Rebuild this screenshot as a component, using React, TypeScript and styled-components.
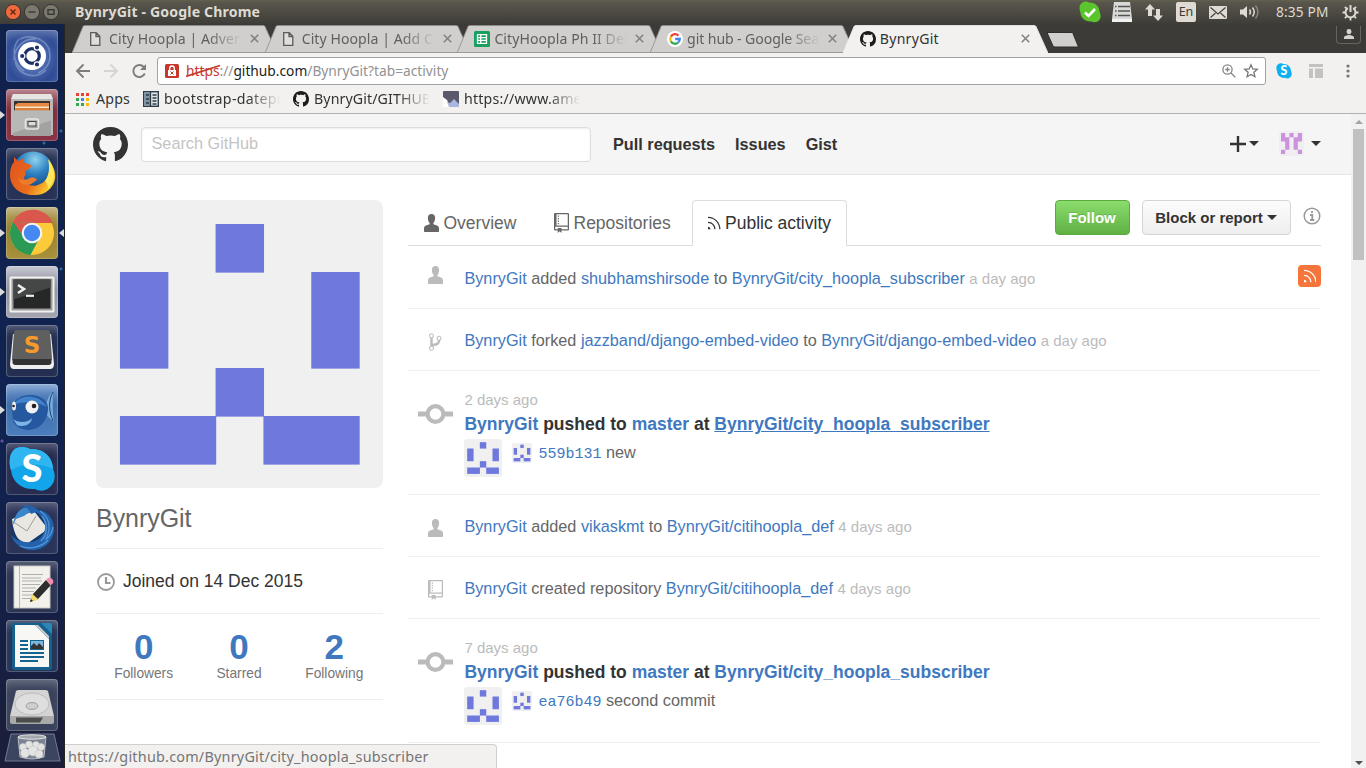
import React from "react";
import styled, { createGlobalStyle, css } from "styled-components";

const UI_FONT = `"Noto Sans", "Open Sans", sans-serif`;
const PAGE_FONT = `"Liberation Sans", Arial, sans-serif`;
const LINK = "#4078c0";

const GlobalStyle = createGlobalStyle`
  * { box-sizing: border-box; }
  html, body { margin: 0; padding: 0; overflow: hidden; }
  body { font-family: ${PAGE_FONT}; }
  svg { display: block; flex: none; }
`;

/* ---------- desktop shell ---------- */

const Desktop = styled.div`
  width: 1366px;
  height: 768px;
  display: flex;
  flex-direction: column;
  overflow: hidden;
  background: #fff;
`;

const Panel = styled.header`
  height: 24px;
  flex: none;
  display: flex;
  align-items: center;
  padding: 0 7px 0 5px;
  background: linear-gradient(#66614f 0, #59564c 2px, #3f3e39 23px, #3c3b37 24px);
  color: #dfdbd2;
  font-family: ${UI_FONT};
`;

const WindowButtons = styled.div`
  display: flex;
  gap: 3px;
  width: 70px;
`;

const WindowTitle = styled.div`
  flex: 1;
  font-size: 14.1px;
  font-weight: 700;
  letter-spacing: 0.15px;
  line-height: 24px;
`;

const Indicators = styled.div`
  display: flex;
  align-items: center;
`;

const Indicator = styled.div<{ $ml: number }>`
  margin-left: ${(p) => p.$ml}px;
  display: flex;
`;

const KeyboardBadge = styled.div`
  width: 20px;
  height: 20px;
  border-radius: 2px;
  background: #dfdbd2;
  color: #3c3b37;
  font-size: 12.5px;
  line-height: 20px;
  text-align: center;
`;

const Clock = styled.div`
  margin-left: 16px;
  width: 53px;
  font-size: 13.7px;
  letter-spacing: 0.15px;
  line-height: 22px;
  margin-top: -1px;
  white-space: nowrap;
`;

const Workspace = styled.div`
  flex: 1;
  display: flex;
  min-height: 0;
`;

const Launcher = styled.aside`
  width: 65px;
  flex: none;
  padding-top: 6px;
  display: flex;
  flex-direction: column;
  gap: 7px;
  border-right: 1px solid #25241f;
  background:
    radial-gradient(circle at 61px 107px, #2c6496 0 1px, transparent 2px),
    radial-gradient(circle at 44px 119px, #2c6496 0 1px, transparent 2px),
    radial-gradient(circle at 61px 245px, #2c6496 0 1px, transparent 2px),
    radial-gradient(circle at 2px 417px, #6a4fa0 0 1px, transparent 2px),
    linear-gradient(#10214a, #102350 35%, #11224f 60%, #171f42 85%, #1c1e38);
`;

const LauncherItem = styled.div<{ $bg: string }>`
  position: relative;
  width: 52px;
  height: 52px;
  margin-left: 6px;
  flex: none;
  border-radius: 4px;
  background: ${(p) => p.$bg};
  box-shadow: inset 0 0 0 1px rgba(255, 255, 255, 0.2), inset 0 8px 10px -4px rgba(255, 255, 255, 0.28);
`;

const Pip = styled.i<{ $side: "left" | "right" }>`
  position: absolute;
  top: 22px;
  border: 4px solid transparent;
  ${(p) =>
    p.$side === "left"
      ? css`
          left: -6px;
          border-left: 5px solid #dcdcdc;
        `
      : css`
          right: -6px;
          border-right: 5px solid #dcdcdc;
        `}
`;

const TrashSlot = styled.div`
  margin: -5px 0 0 4px;
`;

/* ---------- browser chrome ---------- */

const Browser = styled.div`
  flex: 1;
  min-width: 0;
  display: flex;
  flex-direction: column;
  position: relative;
`;

const TabStrip = styled.div`
  height: 29px;
  flex: none;
  display: flex;
  align-items: flex-end;
  padding-left: 7px;
  background: #3c3b37;
`;

const BrowserTab = styled.div<{ $active?: boolean }>`
  position: relative;
  z-index: ${(p) => (p.$active ? 2 : 1)};
  width: 205px;
  height: 28px;
  margin-right: -12.3px;
  padding: 0 18px 1px 17px;
  flex: none;
  display: flex;
  align-items: center;
  font-family: ${UI_FONT};
  font-size: 14.1px;
  color: ${(p) => (p.$active ? "#333" : "#5f5f5f")};
`;

const TabShape = styled.svg`
  position: absolute;
  left: 0;
  top: 0;
  z-index: -1;
`;

const TabTitle = styled.span<{ $ls?: number; $fade?: boolean }>`
  width: 137px;
  margin-left: 4px;
  margin-right: 4px;
  flex: none;
  white-space: nowrap;
  line-height: 22px;
  letter-spacing: ${(p) => p.$ls ?? 0}px;
  ${(p) =>
    p.$fade &&
    css`
      mask-image: linear-gradient(90deg, #000 100px, transparent 133px);
    `}
`;

const NewTabButton = styled.svg`
  margin: 0 0 5px 10px;
`;

const ProfileButton = styled.div`
  margin: 0 5px 9px auto;
  width: 25px;
  height: 18px;
  border: 1px solid #66645e;
  border-top: 0;
  border-radius: 0 0 4px 4px;
  display: flex;
  justify-content: center;
  padding-top: 3px;
`;

const Toolbar = styled.div`
  height: 36px;
  flex: none;
  display: flex;
  align-items: center;
  padding-left: 10px;
  background: #f2f1f0;
  color: #757575;
`;

const NavIcons = styled.div`
  display: flex;
  gap: 11px;
  width: 82px;
`;

const Omnibox = styled.div`
  width: 1109px;
  height: 28px;
  display: flex;
  align-items: center;
  padding: 0 6px 0 7px;
  background: #fff;
  border: 1px solid #a3a2a1;
  border-radius: 3px;
`;

const UrlText = styled.div`
  flex: 1;
  margin-left: 7px;
  font-family: ${UI_FONT};
  font-size: 13.75px;
  line-height: 24px;
  color: #929292;
  white-space: nowrap;
`;

const UrlScheme = styled.span`
  position: relative;
  color: #c6382c;
`;

const SchemeStrike = styled.svg`
  position: absolute;
  left: 0;
  top: 3px;
`;

const UrlHost = styled.span`
  color: #1c1c1c;
`;

const BookmarkBar = styled.div`
  height: 25px;
  flex: none;
  display: flex;
  align-items: center;
  padding: 0 0 4px 11px;
  background: #f2f1f0;
  border-bottom: 1px solid #b3b1ae;
`;

const Bookmark = styled.div<{ $w: number }>`
  width: ${(p) => p.$w}px;
  display: flex;
  align-items: center;
  gap: 5px;
`;

const BookmarkText = styled.span<{ $fade?: boolean; $ls?: number }>`
  width: ${(p) => (p.$fade ? "124px" : "auto")};
  white-space: nowrap;
  font-family: ${UI_FONT};
  font-size: 14.2px;
  line-height: 20px;
  color: #333;
  letter-spacing: ${(p) => p.$ls ?? 0}px;
  ${(p) =>
    p.$fade &&
    css`
      mask-image: linear-gradient(90deg, #000 84px, transparent 116px);
    `}
`;

const StatusBubble = styled.div`
  position: absolute;
  left: 0;
  bottom: 0;
  width: 432px;
  height: 24px;
  padding-left: 3px;
  background: #f2f1f0;
  border: 1px solid #d0cfce;
  border-left: 0;
  border-bottom: 0;
  border-top-right-radius: 4px;
  font-family: ${UI_FONT};
  font-size: 14.4px;
  line-height: 24px;
  color: #757575;
  white-space: nowrap;
  letter-spacing: 0.22px;
`;

const Viewport = styled.div`
  flex: 1;
  min-height: 0;
  display: flex;
`;

const Scrollbar = styled.div`
  width: 15px;
  flex: none;
  display: flex;
  flex-direction: column;
  align-items: center;
  background: #f1f1f1;
`;

const ScrollArrow = styled.i<{ $down?: boolean }>`
  margin: 6px 0 5px;
  border: 4px solid transparent;
  ${(p) =>
    p.$down
      ? css`
          margin: auto 0 3px;
          border-top-color: #505050;
          border-bottom: 0;
        `
      : css`
          border-bottom-color: #a3a3a3;
          border-top: 0;
        `}
`;

const ScrollThumb = styled.div`
  width: 11px;
  height: 131px;
  background: #c1c1c1;
`;

/* ---------- GitHub page ---------- */

const Page = styled.div`
  flex: 1;
  min-width: 0;
  overflow: hidden;
  background: #fff;
`;

const SiteHeader = styled.header`
  height: 61px;
  display: flex;
  align-items: center;
  padding: 0 30px 0 28px;
  background: #f5f5f5;
  border-bottom: 1px solid #e5e5e5;
`;

const SearchBox = styled.div`
  width: 450px;
  height: 35px;
  margin: 0 22px 0 13px;
  padding-left: 9.5px;
  border: 1px solid #ddd;
  border-radius: 4px;
  background: #fff;
  box-shadow: inset 0 1px 2px rgba(0, 0, 0, 0.075);
  font-size: 16.25px;
  line-height: 30px;
  color: #c4c4c4;
`;

const SiteNav = styled.nav`
  flex: 1;
  display: flex;
  gap: 20px;
  font-size: 16.25px;
  font-weight: 700;
  color: #333;
`;

const UserNav = styled.div`
  display: flex;
  align-items: center;
  margin-top: -1px;
`;

const Caret = styled.i<{ $ml: number }>`
  display: inline-block;
  margin-left: ${(p) => p.$ml}px;
  border: 5px solid transparent;
  border-top-color: #333;
  border-bottom: 0;
`;

const Main = styled.main`
  display: flex;
  gap: 25px;
  padding: 25px 30px 0 31px;
`;

const Sidebar = styled.aside`
  width: 287px;
  flex: none;
`;

const UserName = styled.h1`
  margin: 0;
  height: 61px;
  padding-top: 16px;
  border-bottom: 1px solid #eee;
  font-size: 25px;
  font-weight: 400;
  line-height: 29px;
  letter-spacing: -0.04px;
  color: #666;
`;

const Joined = styled.div`
  height: 65px;
  display: flex;
  align-items: center;
  gap: 8px;
  padding-left: 1px;
  border-bottom: 1px solid #eee;
  font-size: 17.5px;
  color: #333;
`;

const JoinedIcon = styled.svg`
  margin-top: 2px;
`;

const Stats = styled.div`
  height: 86px;
  display: flex;
  padding: 13px 1px 0 0;
  border-bottom: 1px solid #eee;
`;

const Stat = styled.div`
  flex: 1;
  text-align: center;
`;

const StatValue = styled.strong`
  display: block;
  font-size: 35px;
  line-height: 39px;
  color: ${LINK};
`;

const StatLabel = styled.span`
  display: block;
  font-size: 13.75px;
  line-height: 15px;
  color: #767676;
`;

const Activity = styled.section`
  flex: 1;
  min-width: 0;
`;

const TabNav = styled.div`
  height: 46px;
  display: flex;
  align-items: flex-start;
  border-bottom: 1px solid #ddd;
`;

const NavTab = styled.div<{ $active?: boolean; $w: number }>`
  width: ${(p) => p.$w}px;
  height: 46px;
  margin-right: 5px;
  padding: 0 0 1px 15px;
  display: flex;
  align-items: center;
  gap: 4.5px;
  border: 1px solid transparent;
  border-bottom: 0;
  border-radius: 4px 4px 0 0;
  font-size: 17.5px;
  color: #666;
  white-space: nowrap;
  ${(p) =>
    p.$active &&
    css`
      background: #fff;
      border-color: #ddd;
      color: #333;
    `}
`;

const ActionBar = styled.div`
  margin-left: auto;
  display: flex;
`;

const Button = styled.button<{ $primary?: boolean; $w: number }>`
  width: ${(p) => p.$w}px;
  height: 35px;
  margin: 0 12px 0 0;
  padding: 0 1px 0 0;
  border: 1px solid #d5d5d5;
  border-radius: 4px;
  background: linear-gradient(#fcfcfc, #eee);
  font-family: ${PAGE_FONT};
  font-size: 15px;
  font-weight: 700;
  color: #333;
  display: flex;
  align-items: center;
  justify-content: center;
  white-space: nowrap;
  ${(p) =>
    p.$primary &&
    css`
      border-color: #5ca941;
      background: linear-gradient(#8add6d, #60b044);
      color: #fff;
      text-shadow: 0 -1px 0 rgba(0, 0, 0, 0.15);
    `}
`;

const InfoIcon = styled.svg`
  margin: 7px 0.5px 0 -0.5px;
`;

const EventRow = styled.div<{ $tall?: boolean; $first?: boolean }>`
  height: ${(p) => (p.$tall ? 124 : p.$first ? 63 : 62)}px;
  width: 912px;
  display: flex;
  align-items: ${(p) => (p.$tall ? "flex-start" : "center")};
  padding-top: ${(p) => (p.$tall ? 20 : p.$first ? 2 : 1)}px;
  border-bottom: 1px solid #f1f1f1;
  font-size: 16.25px;
  line-height: 20px;
  color: #666;
  white-space: nowrap;
`;

const EventIcon = styled.div<{ $shift: number }>`
  width: 56.4px;
  padding-right: 1px;
  flex: none;
  display: flex;
  justify-content: center;
  margin-top: ${(p) => p.$shift}px;
  color: #bbb;
`;

const Link = styled.a<{ $underline?: boolean }>`
  color: ${LINK};
  text-decoration: ${(p) => (p.$underline ? "underline" : "none")};
`;

const Time = styled.time`
  font-size: 15px;
  color: #bbb;
`;

const RssButton = styled.div`
  width: 23px;
  height: 22px;
  margin: -4px -1px 0 auto;
  display: flex;
  justify-content: center;
  padding: 1px 0 0 1px;
  border-radius: 4px;
  background: #f6753b;
  color: #fff;
`;

const PushTitle = styled.div`
  font-size: 17.5px;
  font-weight: 700;
  line-height: 24px;
  margin-top: 2px;
  color: #333;
`;

const PushBody = styled.div`
  padding-top: 7px;
`;

const PushTime = styled(Time)`
  display: block;
  line-height: 20px;
  margin-top: -10px;
  padding-top: 2px;
`;

const Commit = styled.div`
  display: flex;
  align-items: flex-start;
  margin: 3px 0 0 -0.4px;
`;

const CommitText = styled.span`
  margin: 3px 0 0 6.4px;
`;

const Hash = styled.code`
  font-family: "Liberation Mono", monospace;
  font-size: 15px;
  color: ${LINK};
`;

const SmallAvatar = styled.div`
  margin: 4px 0 0 10px;
`;

/* ---------- icons ---------- */

const OctocatIcon = ({ size, color = "#333" }: { size: number; color?: string }) => (
  <svg width={size} height={size} viewBox="0 0 16 16" fill={color}>
    <path d="M8 0C3.58 0 0 3.58 0 8c0 3.54 2.29 6.53 5.47 7.59.4.07.55-.17.55-.38 0-.19-.01-.82-.01-1.49-2.01.37-2.53-.49-2.69-.94-.09-.23-.48-.94-.82-1.13-.28-.15-.68-.52-.01-.53.63-.01 1.08.58 1.23.82.72 1.21 1.87.87 2.33.66.07-.52.28-.87.51-1.07-1.78-.2-3.64-.89-3.64-3.95 0-.87.31-1.59.82-2.15-.08-.2-.36-1.02.08-2.12 0 0 .67-.21 2.2.82.64-.18 1.32-.27 2-.27.68 0 1.36.09 2 .27 1.53-1.04 2.2-.82 2.2-.82.44 1.1.16 1.92.08 2.12.51.56.82 1.27.82 2.15 0 3.07-1.87 3.75-3.65 3.95.29.25.54.73.54 1.48 0 1.07-.01 1.93-.01 2.2 0 .21.15.46.55.38A8.013 8.013 0 0016 8c0-4.42-3.58-8-8-8z" />
  </svg>
);

const PersonIcon = () => (
  <svg width="15" height="18" viewBox="0 0 15 18" fill="currentColor">
    <path d="M7.500 0C5.200 0 3.900 1.500 3.900 3.800c0 2.300.5 4.200 1.700 5.200v1.200L2 11.500C.8 12 0 13 0 14.300V17c0 .6.4 1 1 1h13c.6 0 1-.4 1-1v-2.700c0-1.300-.8-2.300-2-2.800l-3.600-1.300V9c1.200-1 1.700-2.900 1.700-5.200C11.100 1.500 9.800 0 7.500 0z" />
  </svg>
);

const RepoIcon = () => (
  <svg width="15" height="20" viewBox="0 0 12 16" fill="currentColor">
    <path d="M4 9H3V8h1v1zm0-3H3v1h1V6zm0-2H3v1h1V4zm0-2H3v1h1V2zm8-1v12c0 .55-.45 1-1 1H6v2l-1.500-1.500L3 16v-2H1c-.55 0-1-.45-1-1V1c0-.55.45-1 1-1h10c.55 0 1 .45 1 1zm-1 10H1v2h2v-1h3v1h5v-2zm0-10H2v9h9V1z" />
  </svg>
);

const BranchIcon = () => (
  <svg width="12.500" height="20" viewBox="0 0 10 16" fill="currentColor">
    <path d="M10 5c0-1.110-.89-2-2-2a1.993 1.993 0 0 0-1 3.720v.3c-.02.52-.23.98-.63 1.380-.4.4-.86.61-1.380.63-.83.02-1.480.16-2 .45V4.720a1.993 1.993 0 0 0-1-3.720C.88 1 0 1.890 0 3a2 2 0 0 0 1 1.720v6.560c-.59.35-1 .99-1 1.720 0 1.110.89 2 2 2 1.110 0 2-.89 2-2 0-.53-.2-1-.53-1.360.09-.06.48-.41.59-.47.25-.11.56-.17.94-.17 1.050-.05 1.950-.45 2.750-1.250S8.950 7.770 9 6.730h-.02C9.590 6.370 10 5.730 10 5zM2 1.800c.66 0 1.200.55 1.200 1.200 0 .65-.55 1.200-1.200 1.200C1.350 4.200.8 3.650.8 3c0-.65.55-1.200 1.200-1.200zm0 12.410c-.66 0-1.200-.55-1.200-1.200 0-.65.55-1.200 1.200-1.200.65 0 1.200.55 1.200 1.200 0 .65-.55 1.200-1.200 1.200zm6-8c-.66 0-1.200-.55-1.200-1.200 0-.65.55-1.200 1.200-1.200.65 0 1.200.55 1.200 1.200 0 .65-.55 1.200-1.200 1.200z" />
  </svg>
);

const RssIcon = () => (
  <svg width="12.500" height="20" viewBox="0 0 10 16" fill="currentColor">
    <path d="M2 13H0v-2c1.110 0 2 .89 2 2zM0 3v1a9 9 0 0 1 9 9h1C10 7.480 5.520 3 0 3zm0 4v1c2.750 0 5 2.250 5 5h1c0-3.310-2.690-6-6-6z" />
  </svg>
);

const CommitIcon = () => (
  <svg width="35" height="20" viewBox="0 0 35 20" fill="none" stroke="currentColor">
    <path d="M0 10h9M26 10h9" strokeWidth="5" />
    <circle cx="17.500" cy="10" r="7.900" strokeWidth="4.200" />
  </svg>
);

const identiconCells = [
  [2, 0, 1, 1],
  [0, 1, 1, 2],
  [4, 1, 1, 2],
  [2, 3, 1, 1],
  [0, 4, 2, 1],
  [3, 4, 2, 1],
];

const Identicon = ({ size, height = size, radius }: { size: number; height?: number; radius: number }) => (
  <svg width={size} height={height} viewBox="0 0 420 420" preserveAspectRatio="none">
    <rect width="420" height="420" rx={(radius * 420) / size} fill="#f0f0f0" />
    {identiconCells.map(([x, y, w, h], i) => (
      <rect key={i} x={35 + x * 70} y={35 + y * 70} width={w * 70 + 0.9} height={h * 70 + 0.9} fill="#6f79dd" />
    ))}
  </svg>
);

const ViewerAvatar = () => (
  <svg width="25" height="25" viewBox="0 0 25 25">
    <rect width="25" height="25" rx="3" fill="#f0eef1" />
    <path
      d="M2 2h4.200v4.300h4.200v12.500H6.200v-8.400H2zM10.400 2h4.200v4.300h-4.200zM18.800 2H23v8.400h-4.200v8.400h-4.200V6.300h4.200zM2 18.800h4.200V23H2zM18.800 18.800H23V23h-4.200z"
      fill="#cb93dd"
    />
  </svg>
);

const CloseX = () => (
  <svg width="9" height="9" viewBox="0 0 9 9" stroke="#858381" strokeWidth="1.600">
    <path d="M.8.8l7.400 7.400M8.200.8L.8 8.200" />
  </svg>
);

const FileIcon = () => (
  <svg width="16" height="16" viewBox="0 0 16 16" fill="#dededc" stroke="#5c5b59" strokeWidth="1.300">
    <path d="M1.700 1.700h5.500l3.600 3.600v9H1.700zM7 1.700v3.800h3.800" />
  </svg>
);

const SheetsIcon = () => (
  <svg width="16" height="16" viewBox="0 0 16 16">
    <rect width="16" height="16" rx="1.500" fill="#17a05e" />
    <path d="M3.500 3.700h9v8.600h-9zM3.500 6.600h9M3.500 9.400h9M6.700 3.700v8.600" fill="none" stroke="#fff" strokeWidth="1.300" />
  </svg>
);

const GoogleIcon = () => (
  <svg width="16" height="16" viewBox="0 0 16 16" fill="none" strokeWidth="2.300">
    <circle cx="8" cy="8" r="8" fill="#fff" />
    <path d="M11.500 4.600A4.800 4.800 0 0 0 3.900 5.600" stroke="#ea4335" />
    <path d="M3.900 5.600a4.800 4.800 0 0 0 0 4.800" stroke="#fbbc05" />
    <path d="M3.900 10.400a4.800 4.800 0 0 0 7.300 1.100" stroke="#34a853" />
    <path d="M11.200 11.500A4.800 4.800 0 0 0 12.800 8H8.200" stroke="#4285f4" />
  </svg>
);

const WindowButton = ({ kind }: { kind: "close" | "min" | "max" }) => (
  <svg width="16" height="18" viewBox="0 0 16 18">
    <circle cx="8" cy="9" r="7.600" fill={kind === "close" ? "#ee6a3c" : "#7b786e"} stroke="#33322e" strokeWidth=".9" />
    <g fill="none" stroke={kind === "close" ? "#5e2210" : "#34332f"} strokeWidth="1.300">
      {kind === "close" && <path d="M5.500 6.500l5 5M10.500 6.500l-5 5" />}
      {kind === "min" && <path d="M4.500 9h7" />}
      {kind === "max" && <rect x="5" y="6.700" width="6" height="4.600" />}
    </g>
  </svg>
);

const SkypeCloud = ({ size, color, children }: { size: number; color: string; children?: React.ReactNode }) => (
  <svg width={size} height={size} viewBox="0 0 22 22">
    <path
      d="M6.500.5c1.600 0 2.600.5 3.400 1C15.500 1 20.500 5 20.600 11c1.900 3.200 1.200 7.500-1.700 9.200-2.200 1.500-4.700 1.200-6.300.2C6.500 21 1.500 17 1.400 11 .3 9 0 5.500 1.500 3.200A6 6 0 0 1 6.500.5z"
      fill={color}
    />
    {children}
  </svg>
);

const tiles: { bg: string; left?: boolean; right?: boolean; art: React.ReactNode }[] = [
  {
    bg: "radial-gradient(circle at 50% 55%, #6f8cc8, #2f4c96 65%, #38559c)",
    art: (
      <>
        <g fill="none" stroke="#a9bce4" strokeOpacity=".45" strokeWidth="1.600">
          <path d="M14 9C26 3 44 10 44 26c0 9-6 15-12 17M8 30C8 14 22 8 30 9M40 40C30 50 12 46 9 31M13 9C5 18 7 34 18 41" />
        </g>
        <circle cx="26" cy="26" r="14" fill="#fff" />
        <circle cx="26" cy="26" r="7.300" fill="none" stroke="#1c2f66" strokeWidth="3.200" />
        <g fill="#1c2f66" stroke="#fff" strokeWidth="1.200">
          <circle cx="16.200" cy="26" r="2.700" />
          <circle cx="31" cy="17.500" r="2.700" />
          <circle cx="31" cy="34.500" r="2.700" />
        </g>
      </>
    ),
  },
  {
    bg: "linear-gradient(#a86673, #7c2d3c 40%, #8a3345)",
    left: true,
    art: (
      <>
        <path d="M7 5h38l2 6v35H5V11z" fill="#b9b9b7" />
        <path d="M7 5h38l2 5H5z" fill="#e4e4e2" />
        <rect x="8" y="12" width="36" height="12" fill="#3a3331" />
        <path d="M9 16l3-2h31v8H9z" fill="#e58943" />
        <path d="M9 17.500h34v1.500H9z" fill="#f7e3c8" />
        <path d="M10 19h32v4H10z" fill="#df7f37" />
        <rect x="7" y="21.500" width="38" height="25.500" rx="1" fill="#a2a2a0" />
        <path d="M7 21.500h38v10L7 44z" fill="#b8b8b6" />
        <rect x="19.500" y="30" width="13" height="10" rx="2" fill="none" stroke="#e6e6e4" strokeWidth="1.600" />
        <rect x="22" y="32.500" width="8" height="4.500" fill="#ddd" stroke="#444" />
      </>
    ),
  },
  {
    bg: "#273356",
    art: (
      <>
        <defs>
          <radialGradient id="globe" cx=".55" cy=".2" r=".8">
            <stop offset="0" stopColor="#8fd3ee" />
            <stop offset=".45" stopColor="#2b7fc0" />
            <stop offset="1" stopColor="#14346c" />
          </radialGradient>
          <linearGradient id="fox" x1="0" y1="0" x2="1" y2=".5">
            <stop offset="0" stopColor="#e0521f" />
            <stop offset=".65" stopColor="#ea6d1c" />
            <stop offset="1" stopColor="#fbc82f" />
          </linearGradient>
        </defs>
        <circle cx="27" cy="24" r="20.500" fill="url(#globe)" />
        <path d="M44 14c4 5 6 11 5 17-2 10-11 17-22 16C13 47 4 38 4 27c0-5 1-10 4-13l0-5 4 4 6-3-1 4c3 1 5 2 8 3 1 3-3 4-6 6 1 2 1 4-1 6 1 8 9 11 16 7 8-3 10-11 10-22z" fill="url(#fox)" />
        <path d="M42 11c7 8 9 21 0 30 0-4-1-6-3-8 4-6 5-13 3-22z" fill="#fde75a" />
        <path d="M12 30c3 3 7 2 10 1 4-2 7-2 9 1-4 2-5 5-10 5s-8-3-9-7z" fill="#ee7a2b" />
      </>
    ),
  },
  {
    bg: "linear-gradient(#b6a567, #98822f 40%, #a8903c)",
    left: true,
    right: true,
    art: (
      <>
        <circle cx="26" cy="26" r="22" fill="#fccb3c" />
        <path d="M7 15a22 22 0 0 1 40 1H26z" fill="#d9574c" />
        <path d="M7 15A22 22 0 0 0 24.500 48L34 30 26 16z" fill="#2a9a55" />
        <path d="M7 15l10 14 9-13z" fill="#d9574c" />
        <path d="M7 15l10 15-1 8A22 22 0 0 1 7 15z" fill="#2a9a55" />
        <circle cx="26" cy="26" r="10.300" fill="#f5f5f5" />
        <circle cx="26" cy="26" r="8.200" fill="#4688f1" />
      </>
    ),
  },
  {
    bg: "linear-gradient(#b9bac6, #92939f 45%, #a5a5b0)",
    left: true,
    art: (
      <>
        <rect x="3.500" y="10.500" width="45" height="36" rx="1.500" fill="#f0f0ee" />
        <rect x="5.500" y="12.500" width="41" height="32" fill="#9b9b99" />
        <rect x="7.500" y="13.500" width="37" height="29" fill="#262827" />
        <path d="M7.500 13.500h37v8l-37 12z" fill="#444745" />
        <path d="M12 19l6 4-6 4" fill="none" stroke="#eee" strokeWidth="2.600" />
        <path d="M20 29.800h8" stroke="#eee" strokeWidth="2.200" />
      </>
    ),
  },
  {
    bg: "#232e50",
    art: (
      <>
        <path d="M7 9L4 39q0 5 4 5h36q4 0 4-5L45 9z" fill="#efefef" />
        <path d="M8 7q0-2 3-2h30q3 0 3 2l2 26q0 3-3 3H9q-3 0-3-3z" fill="#5f5f5f" />
        <path d="M6.500 34h39v3q0 3-3 3h-33q-3 0-3-3z" fill="#333" />
        <text x="26" y="28" textAnchor="middle" fontFamily="DejaVu Sans" fontWeight="700" fontSize="23" fill="#f8992b">S</text>
      </>
    ),
  },
  {
    bg: "linear-gradient(#6f97cc, #3d6dac 40%, #4c7ebd)",
    left: true,
    art: (
      <>
        <path d="M38 25c3-7 4-13 9-18 0 9-1 19 1 31-5-3-6-7-10-9z" fill="#79aede" />
        <path d="M47 8c-5 9-4 20 0 29" fill="none" stroke="#1d3a68" />
        <path d="M6 24C7 15 16 11 24 11c12 0 19 7 18 15-1 12-9 19-19 20-8 0-14-4-16-9z" fill="#2459a0" />
        <path d="M7 21C15 9 33 10 41 23c-10-6-25-6-34-2z" fill="#4182c8" />
        <path d="M7 35c5 4 15 4 19-1-1 8-10 9-15 7z" fill="#7fb4e6" />
        <circle cx="26" cy="23" r="6.500" fill="#f2f2f2" />
        <circle cx="28" cy="22" r="2.300" fill="#222" />
        <ellipse cx="8" cy="22" rx="2" ry="4.500" fill="#eee" />
        <circle cx="7.500" cy="22" r="1.300" fill="#222" />
      </>
    ),
  },
  {
    bg: "#262d50",
    art: (
      <>
        <path d="M16 4c4 0 6 1 8 2 13-1 23 8 23 20 3 6 2 14-3 18-5 5-11 4-15 2C16 47 6 39 5 27 3 21 3 12 7 8c2-3 5-4 9-4z" fill="#12a5ea" />
        <path d="M16 4c4 0 6 1 8 2 13-1 23 8 23 20-12-6-30-6-42 1C3 21 3 12 7 8c2-3 5-4 9-4z" fill="#2fb5ef" />
        <text x="26" y="39" textAnchor="middle" fontFamily="Lato" fontWeight="900" fontSize="38" fill="#fff">S</text>
      </>
    ),
  },
  {
    bg: "#2a3358",
    art: (
      <>
        <circle cx="27" cy="27" r="21" fill="#14386c" />
        <path d="M6 17l22-8 14 18-20 14C13 40 8 35 6 17z" fill="#e9e7e2" />
        <path d="M6 19l15 10 9-15" fill="none" stroke="#a09c95" />
        <path d="M27 8c12-2 21 7 21 19S38 48 27 48c-11 0-19-6-22-15 8 9 23 9 29 3 9-8 6-21-7-28z" fill="#2463ab" />
        <path d="M8 18C12 6 20 2 31 8c-6 0-9 3-13 6l-8 3-4 8z" fill="#3a86cc" />
        <path d="M15 4c8-2 14 0 18 5l-8 3c-2-5-5-7-10-8z" fill="#2463ab" />
        <path d="M34 9c9 6 12 16 6 28 4-2 6-7 7-12M14 44c10 4 22 1 28-6M36 14c6 8 6 18-1 25" fill="none" stroke="#4f97da" strokeWidth="1.300" />
      </>
    ),
  },
  {
    bg: "#2c3554",
    art: (
      <>
        <rect x="8" y="5" width="36" height="42" fill="#f2f1ec" stroke="#c9c8c4" />
        <path d="M13.500 5v42" stroke="#e9a3a3" />
        <path d="M16 13.500h21M16 17h19M16 20h20M16 23.500h18M16 27h14M16 30.500h12M16 34h10M16 37.500h9" stroke="#b0b0ae" strokeWidth="1.200" />
        <path d="M24 41l3-8L40 19l5 5-13 14z" fill="#2d2d2d" />
        <path d="M24 41l2.500-8 6 5.500z" fill="#f0dc6a" />
        <path d="M24 41l1-3 2 2z" fill="#222" />
        <path d="M40 19l2-2q3-1 5 2 1 3-1 4l-1.500 1.500z" fill="#ee8fae" />
      </>
    ),
  },
  {
    bg: "#253557",
    art: (
      <>
        <path d="M8 3h28l10 10v34q0 3-3 3H9q-3 0-3-3V5q0-2 2-2z" fill="#155f8c" />
        <path d="M9 5h20l14 14v28H9z" fill="#f7f7f5" />
        <path d="M29 5h3l11 11v3z" fill="#c9c9c9" />
        <path d="M35 3h9q2 0 2 2v9z" fill="#2b85b7" />
        <path d="M14 21h8M14 25h8M14 29h8M14 33h24M14 37h24M14 41h18" stroke="#14648f" strokeWidth="1.900" />
        <rect x="24.500" y="20.500" width="13" height="9" fill="#7fb6dd" stroke="#14648f" />
        <path d="M25 29v-3l3-3 3 3 2-3 4 4v2z" fill="#333" />
      </>
    ),
  },
  {
    bg: "#3a425b",
    art: (
      <>
        <path d="M10 12q1-1 3-1h26q2 0 3 1l6 25H4z" fill="#d3d3d3" />
        <path d="M4 37h44v6q0 2-2 2H6q-2 0-2-2z" fill="#a9a9a9" />
        <path d="M10 38.500h27l-3 5H10z" fill="#4c4c4c" />
        <ellipse cx="26" cy="25" rx="17" ry="11" fill="#dedede" stroke="#bcbcbc" />
        <ellipse cx="26" cy="27" rx="6" ry="3.500" fill="#cdcdcd" stroke="#a0a0a0" />
      </>
    ),
  },
];

const TrashIcon = () => (
  <svg width="57" height="30" viewBox="0 0 57 30">
    <path d="M7 1h43l6 27H1z" fill="#3b4560" stroke="#737b90" />
    <path d="M14 4h28l-2 20q-12 4-24 0z" fill="#c9ccd0" fillOpacity=".45" stroke="#dfe1e4" strokeOpacity=".7" />
    <ellipse cx="28" cy="4" rx="14" ry="2.200" fill="#a4a8ad" stroke="#e2e3e5" />
    <g fill="#e4e4e3" stroke="#c3c5c7" strokeWidth=".6">
      <circle cx="19" cy="14" r="3.500" />
      <circle cx="25" cy="11.500" r="3.500" />
      <circle cx="32" cy="12" r="3.500" />
      <circle cx="37" cy="14" r="3.500" />
      <circle cx="21" cy="20" r="4.500" />
      <circle cx="29" cy="18" r="5" />
      <circle cx="35" cy="21" r="4" />
    </g>
  </svg>
);

const appColors = ["#ea4335", "#ea4335", "#ea4335", "#34a853", "#4285f4", "#fbbc05", "#34a853", "#34a853", "#fbbc05"];

const browserTabs: { title: string; icon: React.ReactNode; ls?: number; active?: boolean }[] = [
  { title: "City Hoopla | Adver", icon: <FileIcon />, ls: 0.05 },
  { title: "City Hoopla | Add Ca", icon: <FileIcon />, ls: 0.05 },
  { title: "CityHoopla Ph II Del", icon: <SheetsIcon />, ls: 0.05 },
  { title: "git hub - Google Sea", icon: <GoogleIcon />, ls: -0.1 },
  { title: "BynryGit", icon: <OctocatIcon size={16} color="#1b1b1b" />, ls: 0.25, active: true },
];

const Push = ({ when, hash, message, hovered }: { when: string; hash: string; message: string; hovered?: boolean }) => (
  <EventRow $tall>
    <EventIcon $shift={13}>
      <CommitIcon />
    </EventIcon>
    <PushBody>
      <PushTime>{when}</PushTime>
      <PushTitle>
        <Link>BynryGit</Link> pushed to <Link>master</Link> at{" "}
        <Link $underline={hovered}>BynryGit/city_hoopla_subscriber</Link>
      </PushTitle>
      <Commit>
        <Identicon size={38} radius={3} />
        <SmallAvatar>
          <Identicon size={20} radius={2} />
        </SmallAvatar>
        <CommitText>
          <Hash>{hash}</Hash> {message}
        </CommitText>
      </Commit>
    </PushBody>
  </EventRow>
);

export default function App() {
  return (
    <Desktop>
      <GlobalStyle />
      <Panel>
        <WindowButtons>
          <WindowButton kind="close" />
          <WindowButton kind="min" />
          <WindowButton kind="max" />
        </WindowButtons>
        <WindowTitle>BynryGit - Google Chrome</WindowTitle>
        <Indicators>
          <SkypeCloud size={22} color="#5cc42c">
            <path d="M6 11.500l3.500 3.500 6.500-7" fill="none" stroke="#fff" strokeWidth="2.600" />
          </SkypeCloud>
          <Indicator $ml={11}>
            <svg width="20" height="20" viewBox="0 0 20 20">
              <path d="M2 0h16l2 17v3H0v-3z" fill="#d8d9d9" />
              <path d="M0 17h20v3H0z" fill="#f2f2f2" />
              <path d="M6 4.500h12M6 9h12M6 13.500h12M3 4.500h1.500M3 9h1.500M3 13.500h1.500" stroke="#55544f" strokeWidth="1.300" />
            </svg>
          </Indicator>
          <Indicator $ml={13}>
            <svg width="18" height="17" viewBox="0 0 18 17" fill="#dfdbd2">
              <path d="M5 0l5 5.500H7V12H3V5.500H0zM13 17l-5-5.500h3V5h4v6.500h3z" />
            </svg>
          </Indicator>
          <Indicator $ml={13}>
            <KeyboardBadge>En</KeyboardBadge>
          </Indicator>
          <Indicator $ml={13}>
            <svg width="18" height="13" viewBox="0 0 18 13">
              <rect width="18" height="13" rx="1" fill="#dfdbd2" />
              <path d="M1.500 1.500L9 8l7.500-6.500M1.500 11.500L6.500 7M16.500 11.500L11.500 7" fill="none" stroke="#45443f" strokeWidth="1.200" />
            </svg>
          </Indicator>
          <Indicator $ml={13}>
            <svg width="20" height="16" viewBox="0 0 20 16" fill="none" stroke="#dfdbd2" strokeWidth="1.500">
              <path d="M0 5.500h3l4-3.500v12l-4-3.500H0z" fill="#dfdbd2" stroke="none" />
              <path d="M9.500 5.500q2 2.500 0 5M12.500 3.500q3.500 4.500 0 9" />
              <path d="M15.500 1.500q5 6.500 0 13" stroke="#8b887f" />
            </svg>
          </Indicator>
          <Clock>8:35 PM</Clock>
          <Indicator $ml={13}>
            <svg width="17" height="17" viewBox="0 0 17 17" fill="none" stroke="#dfdbd2">
              <path d="M5.800 4.200a5 5 0 1 0 5.400 0" strokeWidth="2" />
              <path d="M8.500 1v7" strokeWidth="2" />
              <path d="M2.900 2.900l2 2M14.100 2.900l-2 2M.5 8.500h2.500M14 8.500h2.500M2.900 14.100l1.800-1.800M14.100 14.100l-1.800-1.800M8.500 14v2.500" strokeWidth="1.800" />
            </svg>
          </Indicator>
        </Indicators>
      </Panel>

      <Workspace>
        <Launcher>
          {tiles.map((t, i) => (
            <LauncherItem key={i} $bg={t.bg}>
              <svg width="52" height="52" viewBox="0 0 52 52">
                {t.art}
              </svg>
              {t.left && <Pip $side="left" />}
              {t.right && <Pip $side="right" />}
            </LauncherItem>
          ))}
          <TrashSlot>
            <TrashIcon />
          </TrashSlot>
        </Launcher>

        <Browser>
          <TabStrip>
            {browserTabs.map((t, i) => (
              <BrowserTab key={i} $active={t.active}>
                <TabShape width="205" height="28" viewBox="0 0 205 28">
                  <path
                    d="M0 28L11 1.500Q11.500.5 13 .5h178q1.500 0 2 1L205 28z"
                    fill={t.active ? "#f2f1f0" : "#d1cfcd"}
                    stroke={t.active ? "#f2f1f0" : "#8f8d8a"}
                    strokeWidth=".8"
                  />
                  {!t.active && <path d="M0 27.500h205" stroke="#9b9996" />}
                </TabShape>
                {t.icon}
                <TabTitle $fade={!t.active} $ls={t.ls}>
                  {t.title}
                </TabTitle>
                <CloseX />
              </BrowserTab>
            ))}
            <NewTabButton width="33" height="16" viewBox="0 0 33 16">
              <path d="M1 .5h24q1.500 0 2 1L32.500 15H9q-1.500 0-2-1z" fill="#d1cfcd" stroke="#2e2d2a" />
            </NewTabButton>
            <ProfileButton>
              <svg width="10" height="10" viewBox="0 0 10 10" fill="#d5d3cf">
                <path d="M5 0a2.500 2.500 0 0 1 2.500 2.600C7.500 4.200 6.500 5.300 5 5.300S2.500 4.200 2.500 2.600A2.500 2.500 0 0 1 5 0zM0 10V8.500C0 7 3 6 5 6s5 1 5 2.500V10z" />
              </svg>
            </ProfileButton>
          </TabStrip>

          <Toolbar>
            <NavIcons>
              <svg width="17" height="16" viewBox="0 0 17 16" fill="none" stroke="#7d7d7d" strokeWidth="1.900">
                <path d="M15 8H3M8.500 1.500L2 8l6.500 6.500" />
              </svg>
              <svg width="17" height="16" viewBox="0 0 17 16" fill="none" stroke="#d6d5d4" strokeWidth="1.900">
                <path d="M1 8h12M7.500 1.500L14 8l-6.500 6.500" />
              </svg>
              <svg width="17" height="16" viewBox="0 0 17 16" fill="none" stroke="#7d7d7d" strokeWidth="1.900">
                <path d="M13.800 10.500A6 6 0 1 1 12.800 4" />
                <path d="M15 1v6H9z" fill="#7d7d7d" stroke="none" />
              </svg>
            </NavIcons>
            <Omnibox>
              <svg width="14" height="14" viewBox="0 0 14 14">
                <rect width="14" height="14" rx="1.500" fill="#c6382c" />
                <path d="M3 6h8v6H3z" fill="#fff" />
                <path d="M4.700 6V4.300a2.300 2.300 0 0 1 4.600 0V6" fill="none" stroke="#fff" strokeWidth="1.300" />
                <path d="M5.500 7.500l3 3M8.500 7.500l-3 3" stroke="#c6382c" />
              </svg>
              <UrlText>
                <UrlScheme>
                  https
                  <SchemeStrike width="36" height="14" viewBox="0 0 36 14">
                    <path d="M0 12.500L34 1.500" stroke="#c6382c" strokeWidth="1.800" />
                  </SchemeStrike>
                </UrlScheme>
                ://<UrlHost>github.com</UrlHost>/BynryGit?tab=activity
              </UrlText>
              <svg width="14" height="14" viewBox="0 0 14 14" fill="none" stroke="#858585" strokeWidth="1.300">
                <circle cx="5.500" cy="5.500" r="4.600" />
                <path d="M9 9l4.300 4.300M3.200 5.500h4.600M5.500 3.200v4.600" />
              </svg>
              <Indicator $ml={7}>
                <svg width="16" height="16" viewBox="0 0 16 16" fill="none" stroke="#757575" strokeWidth="1.300">
                  <path d="M8 1.800l1.800 4.100 4.500.4-3.400 3 1 4.400L8 11.400l-3.900 2.300 1-4.400-3.400-3 4.500-.4z" />
                </svg>
              </Indicator>
            </Omnibox>
            <Indicator $ml={10}>
              <SkypeCloud size={16} color="#0fb0f0">
                <text x="11" y="17" textAnchor="middle" fontFamily="Lato" fontWeight="900" fontSize="17" fill="#fff">S</text>
              </SkypeCloud>
            </Indicator>
            <Indicator $ml={17}>
              <svg width="14" height="14" viewBox="0 0 14 14" fill="#c3c2c1">
                <path d="M0 0h14v3H0zM0 4.500h4V14H0zM6 4.500h8V14H6z" />
              </svg>
            </Indicator>
            <Indicator $ml={23}>
              <svg width="4" height="14" viewBox="0 0 4 14" fill="#757575">
                <circle cx="2" cy="2" r="1.600" />
                <circle cx="2" cy="7" r="1.600" />
                <circle cx="2" cy="12" r="1.600" />
              </svg>
            </Indicator>
          </Toolbar>

          <BookmarkBar>
            <Bookmark $w={67}>
              <svg width="15" height="13" viewBox="0 0 15 13">
                {appColors.map((c, i) => (
                  <rect key={i} x={(i % 3) * 5} y={Math.floor(i / 3) * 5} width="3" height="3" fill={c} />
                ))}
              </svg>
              <BookmarkText $ls={0.2}>Apps</BookmarkText>
            </Bookmark>
            <Bookmark $w={150}>
              <svg width="16" height="16" viewBox="0 0 16 16">
                <rect x=".7" y=".7" width="14.600" height="14.600" fill="#dfe6ea" stroke="#2e3b45" strokeWidth="1.400" />
                <path d="M1 1h6.500v14H1z" fill="#7f93a0" />
                <path d="M7.500 1v14M9.500 4h4M9.500 7h4M9.500 10h4M9.500 13h4M3 4h3M3 8h3M3 12h3" stroke="#2e3b45" strokeWidth="1.300" />
              </svg>
              <BookmarkText $fade $ls={0.3}>
                bootstrap-datepi
              </BookmarkText>
            </Bookmark>
            <Bookmark $w={150}>
              <OctocatIcon size={16} color="#1b1b1b" />
              <BookmarkText $fade $ls={0.1}>
                BynryGit/GITHUB
              </BookmarkText>
            </Bookmark>
            <Bookmark $w={150}>
              <svg width="16" height="16" viewBox="0 0 16 16">
                <rect width="16" height="16" rx="1" fill="#5a596b" />
                <path d="M0 6l4 3 3 7H0z" fill="#fff" />
                <path d="M4 11l3 1 4-4 5 5v3H6z" fill="#aab6dd" />
              </svg>
              <BookmarkText $fade $ls={0.2}>
                https://www.ame
              </BookmarkText>
            </Bookmark>
          </BookmarkBar>

          <Viewport>
            <Page>
              <SiteHeader>
                <OctocatIcon size={35} />
                <SearchBox>Search GitHub</SearchBox>
                <SiteNav>
                  <span>Pull requests</span>
                  <span>Issues</span>
                  <span>Gist</span>
                </SiteNav>
                <UserNav>
                  <svg width="16" height="16" viewBox="0 0 16 16" stroke="#333" strokeWidth="2.400">
                    <path d="M0 8h16M8 0v16" />
                  </svg>
                  <Caret $ml={3} />
                  <Indicator $ml={20}>
                    <ViewerAvatar />
                  </Indicator>
                  <Caret $ml={7} />
                </UserNav>
              </SiteHeader>

              <Main>
                <Sidebar>
                  <Identicon size={287} height={288} radius={8} />
                  <UserName>BynryGit</UserName>
                  <Joined>
                    <JoinedIcon width="18" height="18" viewBox="0 0 18 18" fill="none" stroke="#999">
                      <circle cx="9" cy="9" r="8" strokeWidth="1.800" />
                      <path d="M9 4v6h4.500" strokeWidth="2.200" />
                    </JoinedIcon>
                    Joined on 14 Dec 2015
                  </Joined>
                  <Stats>
                    <Stat>
                      <StatValue>0</StatValue>
                      <StatLabel>Followers</StatLabel>
                    </Stat>
                    <Stat>
                      <StatValue>0</StatValue>
                      <StatLabel>Starred</StatLabel>
                    </Stat>
                    <Stat>
                      <StatValue>2</StatValue>
                      <StatLabel>Following</StatLabel>
                    </Stat>
                  </Stats>
                </Sidebar>

                <Activity>
                  <TabNav>
                    <NavTab $w={125}>
                      <PersonIcon />
                      Overview
                    </NavTab>
                    <NavTab $w={149}>
                      <RepoIcon />
                      Repositories
                    </NavTab>
                    <NavTab $w={155} $active>
                      <RssIcon />
                      Public activity
                    </NavTab>
                    <ActionBar>
                      <Button $primary $w={75}>
                        Follow
                      </Button>
                      <Button $w={149}>
                        Block or report
                        <Caret $ml={4} />
                      </Button>
                      <InfoIcon width="18" height="18" viewBox="0 0 18 18" fill="none" stroke="#999">
                        <circle cx="9" cy="9" r="7.800" strokeWidth="1.500" />
                        <path d="M9 4v2M7 8h2.300v5M7 13h4.300" strokeWidth="1.800" />
                      </InfoIcon>
                    </ActionBar>
                  </TabNav>

                  <EventRow $first>
                    <EventIcon $shift={-6}>
                      <PersonIcon />
                    </EventIcon>
                    <div>
                      <Link>BynryGit</Link> added <Link>shubhamshirsode</Link> to{" "}
                      <Link>BynryGit/city_hoopla_subscriber</Link> <Time>a day ago</Time>
                    </div>
                    <RssButton>
                      <RssIcon />
                    </RssButton>
                  </EventRow>
                  <EventRow>
                    <EventIcon $shift={3}>
                      <BranchIcon />
                    </EventIcon>
                    <div>
                      <Link>BynryGit</Link> forked <Link>jazzband/django-embed-video</Link> to{" "}
                      <Link>BynryGit/django-embed-video</Link> <Time>a day ago</Time>
                    </div>
                  </EventRow>
                  <Push when="2 days ago" hash="559b131" message="new" hovered />
                  <EventRow>
                    <EventIcon $shift={3}>
                      <PersonIcon />
                    </EventIcon>
                    <div>
                      <Link>BynryGit</Link> added <Link>vikaskmt</Link> to <Link>BynryGit/citihoopla_def</Link>{" "}
                      <Time>4 days ago</Time>
                    </div>
                  </EventRow>
                  <EventRow>
                    <EventIcon $shift={3}>
                      <RepoIcon />
                    </EventIcon>
                    <div>
                      <Link>BynryGit</Link> created repository <Link>BynryGit/citihoopla_def</Link>{" "}
                      <Time>4 days ago</Time>
                    </div>
                  </EventRow>
                  <Push when="7 days ago" hash="ea76b49" message="second commit" />
                </Activity>
              </Main>
            </Page>
            <Scrollbar>
              <ScrollArrow />
              <ScrollThumb />
              <ScrollArrow $down />
            </Scrollbar>
          </Viewport>
          <StatusBubble>https://github.com/BynryGit/city_hoopla_subscriber</StatusBubble>
        </Browser>
      </Workspace>
    </Desktop>
  );
}
